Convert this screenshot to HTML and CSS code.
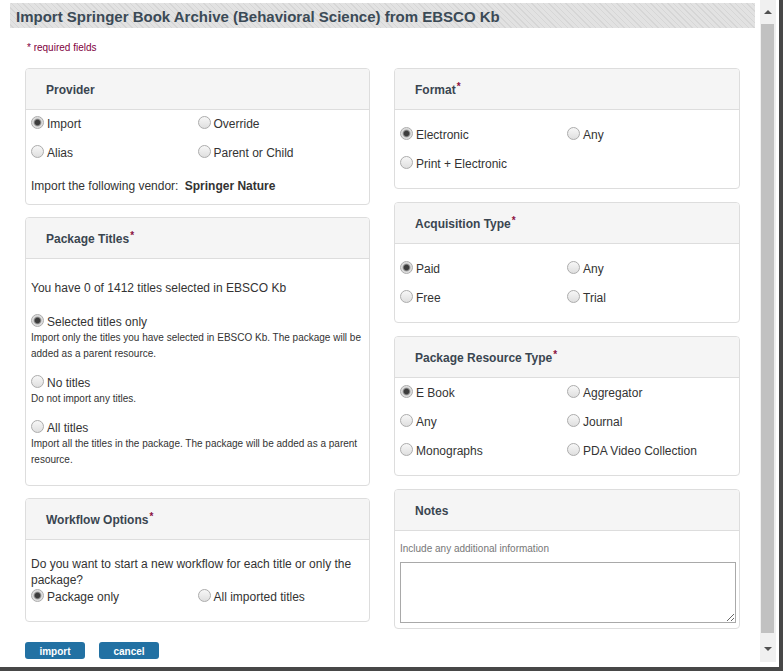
FILE: index.html
```html
<!DOCTYPE html>
<html>
<head>
<meta charset="utf-8">
<link rel="stylesheet" href="styles.css">
</head>
<body>
<div class="window">
  <div class="viewport">
    <div class="content">
      <h1 class="titlebar">Import Springer Book Archive (Behavioral Science) from EBSCO Kb</h1>
      <p class="required">* required fields</p>
      <div class="columns">
        <div class="col col-left">
          <section class="panel">
            <div class="panel-head">Provider</div>
            <div class="panel-body body-provider">
              <div class="radio-grid">
                <label class="opt"><input type="radio" name="prov" checked>Import</label>
                <label class="opt"><input type="radio" name="prov">Override</label>
                <label class="opt"><input type="radio" name="prov">Alias</label>
                <label class="opt"><input type="radio" name="prov">Parent or Child</label>
              </div>
              <p class="vendor">Import the following vendor: <b>Springer Nature</b></p>
            </div>
          </section>
          <section class="panel">
            <div class="panel-head">Package Titles<sup>*</sup></div>
            <div class="panel-body body-titles">
              <p class="line">You have 0 of 1412 titles selected in EBSCO Kb</p>
              <div class="choice">
                <label class="line-opt"><input type="radio" name="titles" checked>Selected titles only</label>
                <p class="desc">Import only the titles you have selected in EBSCO Kb. The package will be added as a parent resource.</p>
              </div>
              <div class="choice">
                <label class="line-opt"><input type="radio" name="titles">No titles</label>
                <p class="desc">Do not import any titles.</p>
              </div>
              <div class="choice">
                <label class="line-opt"><input type="radio" name="titles">All titles</label>
                <p class="desc">Import all the titles in the package. The package will be added as a parent resource.</p>
              </div>
            </div>
          </section>
          <section class="panel">
            <div class="panel-head">Workflow Options<sup>*</sup></div>
            <div class="panel-body body-workflow">
              <p class="line">Do you want to start a new workflow for each title or only the package?</p>
              <div class="radio-grid tight">
                <label class="opt"><input type="radio" name="wf" checked>Package only</label>
                <label class="opt"><input type="radio" name="wf">All imported titles</label>
              </div>
            </div>
          </section>
        </div>
        <div class="col col-right">
          <section class="panel">
            <div class="panel-head">Format<sup>*</sup></div>
            <div class="panel-body pad-top">
              <div class="radio-grid">
                <label class="opt"><input type="radio" name="fmt" checked>Electronic</label>
                <label class="opt"><input type="radio" name="fmt">Any</label>
                <label class="opt"><input type="radio" name="fmt">Print + Electronic</label>
              </div>
            </div>
          </section>
          <section class="panel">
            <div class="panel-head">Acquisition Type<sup>*</sup></div>
            <div class="panel-body pad-top">
              <div class="radio-grid">
                <label class="opt"><input type="radio" name="acq" checked>Paid</label>
                <label class="opt"><input type="radio" name="acq">Any</label>
                <label class="opt"><input type="radio" name="acq">Free</label>
                <label class="opt"><input type="radio" name="acq">Trial</label>
              </div>
            </div>
          </section>
          <section class="panel">
            <div class="panel-head">Package Resource Type<sup>*</sup></div>
            <div class="panel-body">
              <div class="radio-grid">
                <label class="opt"><input type="radio" name="res" checked>E Book</label>
                <label class="opt"><input type="radio" name="res">Aggregator</label>
                <label class="opt"><input type="radio" name="res">Any</label>
                <label class="opt"><input type="radio" name="res">Journal</label>
                <label class="opt"><input type="radio" name="res">Monographs</label>
                <label class="opt"><input type="radio" name="res">PDA Video Collection</label>
              </div>
            </div>
          </section>
          <section class="panel">
            <div class="panel-head">Notes</div>
            <div class="panel-body body-notes">
              <p class="hint">Include any additional information</p>
              <textarea class="notes"></textarea>
            </div>
          </section>
        </div>
      </div>
      <div class="actions">
        <button class="btn">import</button>
        <button class="btn">cancel</button>
      </div>
    </div>
    <div class="scrollbar">
      <div class="arrow arrow-up"></div>
      <div class="thumb"></div>
      <div class="arrow arrow-down"></div>
    </div>
  </div>
</div>
</body>
</html>
```

FILE: styles.css
```css
* { box-sizing: border-box; }
html, body { margin: 0; padding: 0; background: #fff; }
body {
  font-family: "Liberation Sans", Arial, sans-serif;
  color: #333;
  font-size: 12px;
}
.window {
  width: 783px;
  height: 671px;
  border-right: 4px solid #474747;
  border-bottom: 4px solid #474747;
  overflow: hidden;
}
.viewport {
  display: flex;
  height: 667px;
}
.content {
  width: 760px;
  flex: none;
  padding-top: 3px;
  overflow: hidden;
}
.titlebar {
  margin: 0 0 0 10px;
  width: 745px;
  height: 25px;
  padding-left: 6px;
  padding-top: 1px;
  display: flex;
  align-items: center;
  font-size: 15px;
  font-weight: bold;
  color: #3b4a56;
  background: repeating-linear-gradient(45deg, #e2e2e2 0 2px, #d6d6d6 2px 3px, #e2e2e2 3px 4px);
}
.required {
  margin: 13px 0 0 27px;
  padding-top: 1px;
  font-size: 10px;
  line-height: 12px;
  color: #800040;
}
.columns {
  margin: 14px 0 0 25px;
  display: grid;
  grid-template-columns: 345px 346px;
  column-gap: 24px;
  align-items: start;
}
.col { display: flex; flex-direction: column; }
.col-left { gap: 12px; }
.col-right { gap: 13px; }
.panel {
  border: 1px solid #dddddd;
  border-radius: 4px;
  background: #fff;
}
.panel-head {
  height: 41px;
  border-bottom: 1px solid #dddddd;
  background: #f5f5f5;
  border-radius: 3px 3px 0 0;
  padding-left: 20px;
  padding-top: 2px;
  display: flex;
  align-items: center;
  font-weight: bold;
  font-size: 12px;
  color: #3a4550;
}
.panel-head sup {
  color: #8b1040;
  font-size: 10px;
  line-height: 0;
  position: relative;
  top: -3px;
  margin-left: 1px;
  align-self: center;
}
.panel-body { padding: 0 5px 10px 5px; }
.pad-top { padding-top: 10px; }
.radio-grid {
  display: grid;
  grid-template-columns: 1fr 1fr;
}
.opt {
  height: 29px;
  padding-top: 1px;
  display: flex;
  align-items: center;
}
.body-provider .opt { padding-top: 0; padding-bottom: 1px; }
.tight .opt { height: 18px; padding-top: 0; }
input[type="radio"] {
  -webkit-appearance: none;
  appearance: none;
  width: 13px;
  height: 13px;
  margin: 0 3px 0 0;
  position: relative;
  top: -2px;
  border-radius: 50%;
  border: 1px solid #acacac;
  background: linear-gradient(#f7f7f7, #dfdfdf);
  flex: none;
}
input[type="radio"]:checked {
  background: radial-gradient(circle, #3c3c3c 0 2.2px, #848484 3.2px, #dadada 4.3px, #ececec 100%);
}
p { margin: 0; }
.body-provider { padding-bottom: 10px; }
.vendor { margin-top: 10px; line-height: 16px; }
.vendor b { margin-left: 3px; }
.body-titles { padding: 21px 5px 17px 5px; }
.line { line-height: 16px; }
.choice { margin-top: 13px; }
.body-titles .line + .choice { margin-top: 18px; }
.line-opt { height: 16px; display: flex; align-items: center; }
.desc { font-size: 10px; line-height: 16px; }
.body-workflow { padding: 16px 5px 15px 5px; }
.body-notes { padding: 10px 5px 5px 5px; }
.hint { font-size: 10px; line-height: 16px; color: #777; }
.notes {
  display: block;
  margin-top: 5px;
  width: 336px;
  height: 61px;
  border: 1px solid #a9a9a9;
  border-radius: 0;
  font-family: inherit;
}
.actions {
  margin: 13px 0 0 25px;
  display: flex;
  gap: 14px;
}
.btn {
  width: 60px;
  height: 17px;
  padding: 2px 0 0 0;
  border: none;
  border-radius: 3px;
  background: #2271a3;
  color: #fff;
  font-family: "Liberation Sans", Arial, sans-serif;
  font-size: 10px;
  font-weight: bold;
  line-height: 15px;
}
.scrollbar {
  width: 16px;
  height: 662px;
  flex: none;
  background: #f0f0f0;
  display: flex;
  flex-direction: column;
  align-items: center;
}
.arrow { width: 0; height: 0; border-left: 4px solid transparent; border-right: 4px solid transparent; }
.arrow-up { margin-top: 10px; border-bottom: 4px solid #505050; }
.arrow-down { margin-top: 14px; border-top: 4px solid #505050; }
.thumb {
  margin-top: 10px;
  width: 13px;
  height: 609px;
  background: #c1c1c1;
  margin-left: -1px;
}
```
